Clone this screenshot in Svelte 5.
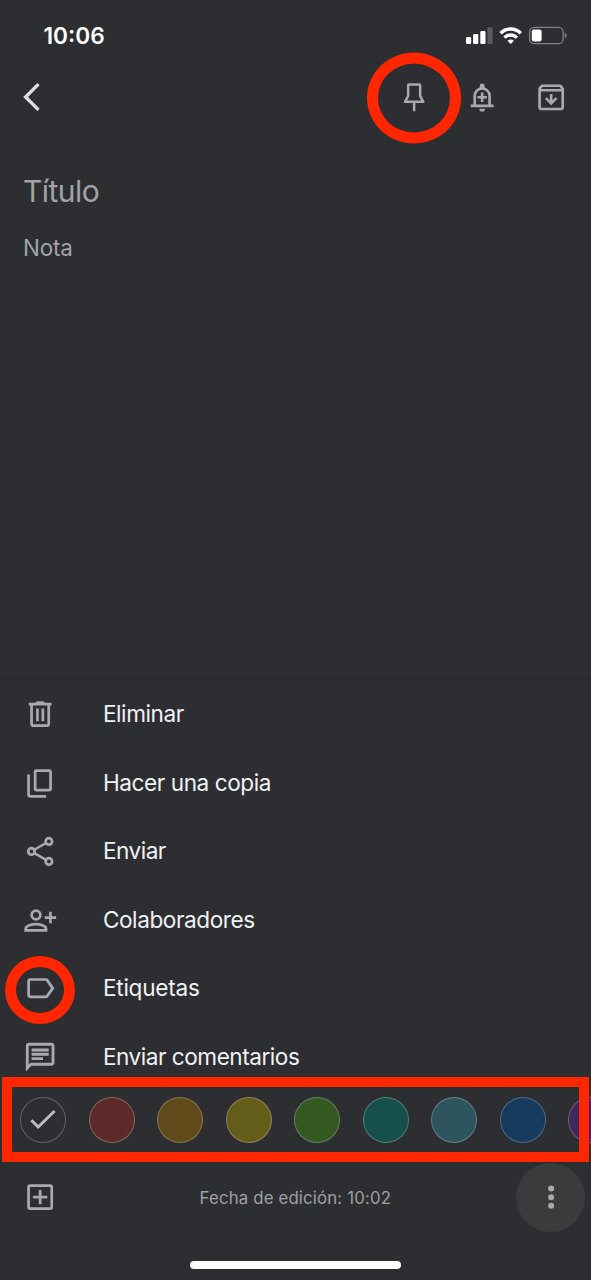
<script>
  const actions = [
    { id: 'trash', label: 'Eliminar', tracking: -0.42 },
    { id: 'copy', label: 'Hacer una copia', tracking: -0.43 },
    { id: 'share', label: 'Enviar', tracking: -0.5 },
    { id: 'person', label: 'Colaboradores', tracking: -0.42 },
    { id: 'label', label: 'Etiquetas', tracking: -0.24 },
    { id: 'chat', label: 'Enviar comentarios', tracking: -0.48 }
  ];
  const colors = ['#2d2e31', '#5c2b29', '#614a19', '#635d19', '#345920', '#16504b', '#2d555e', '#173a5f', '#42275e'];
</script>

{#snippet icon(id)}
  <svg class="icon" viewBox="0 0 24 24" fill="none" stroke="currentColor" stroke-width="1.9">
    {#if id === 'pin'}
      <path stroke-width="1.75" stroke-linejoin="round" d="M8.5 3.1h7a.7.7 0 0 1 .7.7v7.4l2.2 4.1H5.6l2.2-4.1V3.8a.7.7 0 0 1 .7-.7zM12 15.3v6.5" />
    {:else if id === 'bell'}
      <path stroke-width="1.85" d="M4 18.1h16M6.8 18v-6.9a5.2 5.2 0 0 1 10.4 0V18M12 8.8v6.6M8.7 12.1h6.6" />
      <path fill="currentColor" stroke="none" d="M10.3 6V4.2a1.7 1.7 0 0 1 3.4 0V6zM10 20.1h4a2 2 0 0 1-4 0z" />
    {:else if id === 'archive'}
      <path stroke-width="1.85" stroke-linejoin="round" d="M5.7 4h12.6l1.8 2.1v13a1.2 1.2 0 0 1-1.2 1.2H5.1a1.2 1.2 0 0 1-1.2-1.2v-13zM4 7.2h16" />
      <path stroke-width="1.85" d="M12 9.8v6.5M8.3 12.7l3.7 3.7 3.7-3.7" />
    {:else if id === 'trash'}
      <path d="M4 5h16M6 5v13.9a1.2 1.2 0 0 0 1.2 1.2h9.6a1.2 1.2 0 0 0 1.2-1.2V5M10.1 8v9M13.9 8v9" />
      <path fill="currentColor" stroke="none" d="M9 5V3.7L9.7 3h4.6l.7.7V5z" />
    {:else if id === 'copy'}
      <rect x="8.5" y="3.3" width="10.8" height="13.6" rx="1" />
      <path d="M3.9 6v14a1.2 1.2 0 0 0 1.2 1.2h11.1" />
    {:else if id === 'share'}
      <circle cx="18.1" cy="5.2" r="2.25" /><circle cx="5.9" cy="12.2" r="2.25" /><circle cx="18.1" cy="19.2" r="2.25" />
      <path stroke-width="1.7" d="M16.1 6.3 7.9 11M7.9 13.4l8.2 4.7" />
    {:else if id === 'person'}
      <circle cx="9.1" cy="8.4" r="3.05" />
      <path d="M1.9 19.2v-1.1c0-2.2 4.6-3.3 7.1-3.3s7.1 1.1 7.1 3.3v1.1zM19.2 6.2v8M15.2 10.2h8" />
    {:else if id === 'label'}
      <path fill="currentColor" stroke="none" d="M17.63 5.84C17.27 5.33 16.67 5 16 5L5 5.01C3.9 5.01 3 5.9 3 7v10c0 1.1.9 1.99 2 1.99L16 19c.67 0 1.27-.33 1.63-.84L22 12l-4.37-6.16zM16 17.1H4.9V6.9H16l3.6 5.1z" />
    {:else if id === 'chat'}
      <path fill="currentColor" stroke="none" d="M4 4h16v12H5.17L4 17.17V4m0-2c-1.1 0-1.99.9-1.99 2L2 22l4-4h14c1.1 0 2-.9 2-2V4c0-1.1-.9-2-2-2H4zm2 10h8v2H6v-2zm0-3h12v2H6V9zm0-3h12v2H6V6z" />
    {:else if id === 'add'}
      <rect x="3.9" y="3.9" width="16.2" height="16.2" rx="1" />
      <path d="M12 7v10M7 12h10" />
    {:else if id === 'more'}
      <g fill="currentColor" stroke="none"><circle cx="12" cy="5.9" r="2.1" /><circle cx="12" cy="12" r="2.1" /><circle cx="12" cy="18.1" r="2.1" /></g>
    {/if}
  </svg>
{/snippet}

<main>
  <header class="status">
    <time>10:06</time>
    <svg width="102" height="20" viewBox="465 25 102 20" fill="#fff">
      <rect x="466" y="37" width="5.2" height="7" rx="1.2" />
      <rect x="473.1" y="34" width="5.2" height="10" rx="1.2" />
      <rect x="480.3" y="31" width="5.2" height="13" rx="1.2" />
      <rect x="487.4" y="27.2" width="5.2" height="16.8" rx="1.2" fill="#5b5c5f" />
      <g fill="none" stroke="#fff" stroke-width="3.4">
        <path d="M500.6 33.2a14.2 14.2 0 0 1 20.2 0" />
        <path d="M504.5 37.6a8.8 8.8 0 0 1 12.4 0" />
      </g>
      <path d="M510.7 44l-3.2-3.2a4.5 4.5 0 0 1 6.4 0z" />
      <rect x="529.6" y="27.4" width="33.6" height="16.2" rx="4.6" fill="none" stroke="#808184" stroke-width="1.3" />
      <rect x="531.8" y="29.5" width="9.8" height="12" rx="2" />
      <path d="M564.8 32.8c2.5 1 2.5 4.6 0 5.6z" fill="#808184" />
    </svg>
  </header>

  <nav class="toolbar">
    <svg class="back" width="20" height="30" viewBox="0 0 20 30" fill="none" stroke="#dfdfe2" stroke-width="3.4"><path d="M16.5 2.1 3.6 15l12.9 12.9" /></svg>
    <div class="tools">
      <span class="marked">{@render icon('pin')}<i class="ring pin-ring"></i></span>
      {@render icon('bell')}
      {@render icon('archive')}
    </div>
  </nav>

  <section class="note">
    <h1>Título</h1>
    <p>Nota</p>
  </section>

  <section class="sheet">
    <ul>
      {#each actions as a}
        <li>
          <span class="marked">{@render icon(a.id)}{#if a.id === 'label'}<i class="ring label-ring"></i>{/if}</span>
          <span class="text" style="letter-spacing:{a.tracking}px">{a.label}</span>
        </li>
      {/each}
    </ul>
    <div class="palette">
      {#each colors as c, i}
        <span class="swatch" style="background:{c}">
          {#if i === 0}
            <svg width="28" height="22" viewBox="0 0 28 22" fill="none" stroke="#bcbdc0" stroke-width="3"><path d="M2.3 11.2 9.2 18 25.6 2" /></svg>
          {/if}
        </span>
      {/each}
      <i class="frame"></i>
    </div>
  </section>

  <footer>
    {@render icon('add')}
    <span class="edited">Fecha de edición: 10:02</span>
    <span class="more">{@render icon('more')}</span>
  </footer>
  <div class="home"></div>
</main>

<style>
  :global(body) { background: #2d2e31; overflow: hidden; }
  main { box-sizing: border-box; width: 591px; height: 1280px; overflow: hidden; display: flex; flex-direction: column; background: #2d2e31; color: #f1f1f3; font-family: Inter, "Liberation Sans", sans-serif; }
  .status { height: 70px; flex: none; box-sizing: border-box; padding: 0 24px 0 43.5px; display: flex; justify-content: space-between; align-items: center; }
  time { color: #fff; font-size: 22.7px; font-weight: 600; line-height: 26px; padding-top: 2px; }
  .icon { width: 34.3px; height: 34.3px; display: block; flex: none; color: #a9aaad; }
  .toolbar { height: 54px; flex: none; box-sizing: border-box; padding: 0 23px 0 22px; display: flex; align-items: center; justify-content: space-between; }
  .tools { display: flex; gap: 34.2px; }
  .marked { position: relative; display: block; flex: none; }
  .ring { position: absolute; box-sizing: border-box; border: 11.5px solid #ff2600; border-radius: 50%; left: 50%; top: 50%; transform: translate(-50%, -50%); }
  .pin-ring { width: 94px; height: 91px; margin-top: 1.5px; }
  .label-ring { width: 70px; height: 68px; margin-top: 1.5px; }
  .note { flex: 1; padding: 47px 23px 0; color: #a2a3a6; }
  h1 { margin: 0; font-size: 30px; line-height: 40px; font-weight: 380; letter-spacing: -0.55px; }
  p { margin: 23px 0 0; font-size: 22.4px; line-height: 28px; letter-spacing: -.2px; }
  .sheet { flex: none; height: 483px; box-shadow: 0 -1px 4px rgba(0, 0, 0, .16); }
  ul { list-style: none; margin: 0; padding: 0; height: 397px; }
  li { height: 68.5px; display: flex; align-items: center; padding-left: 23px; gap: 45.6px; }
  .text { font-size: 22.6px; line-height: 28px; white-space: nowrap; }
  .palette { position: relative; z-index: 1; height: 86px; box-sizing: border-box; padding: 0 0 0 20px; display: flex; align-items: center; gap: 22.5px; overflow: hidden; background: #2d2e31; }
  .swatch { width: 46px; height: 46px; box-sizing: border-box; flex: none; border-radius: 50%; border: 1.5px solid rgba(255, 255, 255, .25); display: flex; align-items: center; justify-content: center; }
  .frame { position: absolute; left: 2px; right: 2px; top: 0; bottom: 1px; border: 10.5px solid #ff2600; }
  footer { height: 68.6px; flex: none; display: flex; align-items: center; justify-content: space-between; padding: 0 6px 0 23px; }
  .edited { font-size: 16.8px; line-height: 20px; padding-top: 1px; color: #9fa0a3; letter-spacing: .16px; white-space: nowrap; margin-left: 17px; }
  .more { width: 68.6px; height: 68.6px; border-radius: 50%; background: #3a3b3d; display: flex; align-items: center; justify-content: center; }
  .home { flex: none; width: 211px; height: 8px; border-radius: 4px; background: #fff; margin: 29.4px 0 11px 190px; }
</style>
